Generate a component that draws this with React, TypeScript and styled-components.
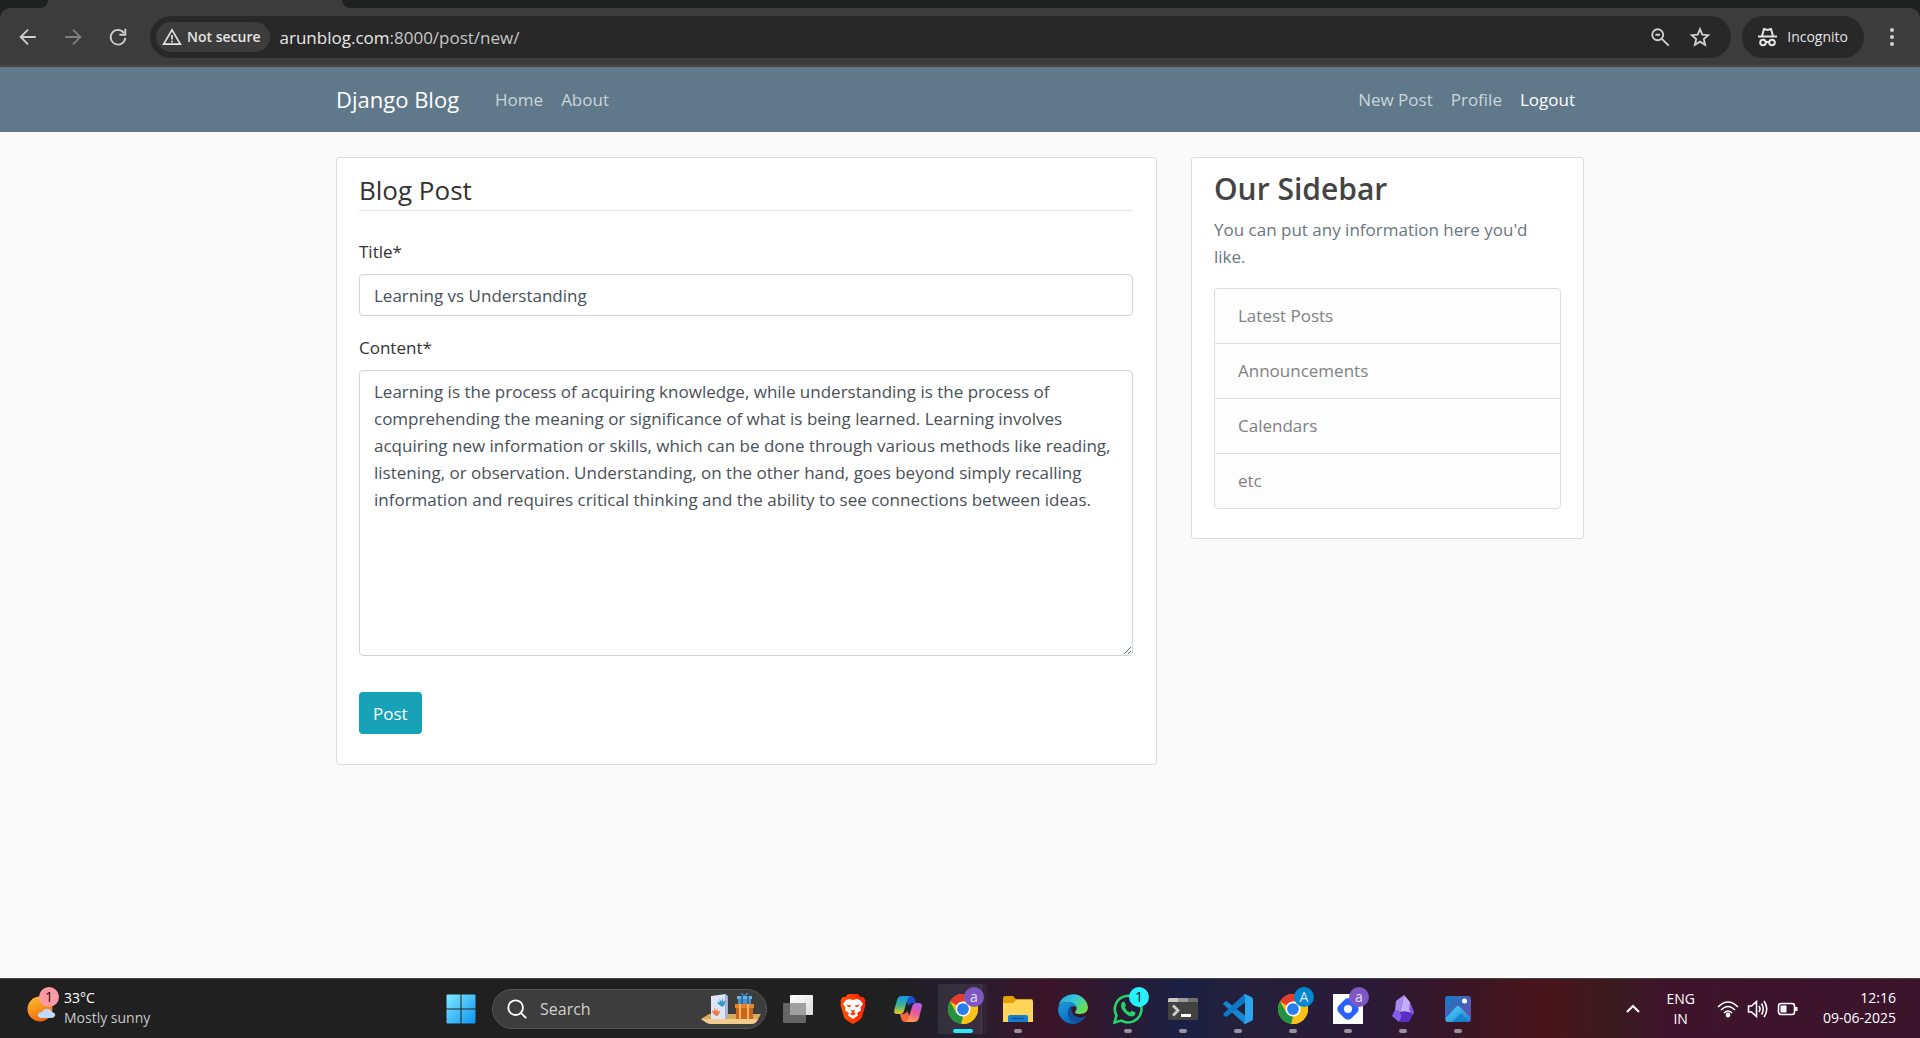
import React from "react";
import styled, { createGlobalStyle } from "styled-components";

const Global = createGlobalStyle`
  *, *::before, *::after { box-sizing: border-box; }
  html, body { margin: 0; background: #fafafa; }
  body { font-family: "Open Sans", "Noto Sans", sans-serif; font-size: 17px; line-height: 27px; color: #333; }
  h2, h3, p, ul { margin: 0; padding: 0; }
  button, input, textarea { font: inherit; }
  a { color: inherit; text-decoration: none; }
`;

const Screen = styled.div`
  display: grid;
  grid-template-rows: auto 1fr auto;
  min-height: 100vh;
`;

/* ---------- browser chrome ---------- */

const TabStrip = styled.div`
  display: flex;
  height: 8px;
  background: #3c3c3c;
`;
const StripPart = styled.div<{ $grow?: boolean }>`
  background: #1f2120;
  width: ${(p) => (p.$grow ? "auto" : "48px")};
  flex: ${(p) => (p.$grow ? "1" : "none")};
  border-radius: ${(p) => (p.$grow ? "0 0 0 10px" : "0 0 10px 0")};
`;
const ActiveTab = styled.div`
  width: 294px;
`;
const Toolbar = styled.div`
  display: flex;
  align-items: center;
  height: 59px;
  padding: 0 13px;
  background: #3c3c3c;
  border-bottom: 2px solid #474747;
  border-radius: 10px 10px 0 0;
`;
const ToolbarBack = styled.div`
  background: #1f2120;
`;
const IconButton = styled.button<{ $dim?: boolean }>`
  display: flex;
  align-items: center;
  justify-content: center;
  width: 30px;
  height: 30px;
  padding: 0;
  border: 0;
  background: none;
  color: ${(p) => (p.$dim ? "#7f7f7f" : "#d0d0d0")};
`;
const NavButtons = styled.div`
  display: flex;
  gap: 15px;
  margin-right: 17px;
`;
const Omnibox = styled.div`
  display: flex;
  align-items: center;
  flex: 1;
  height: 42px;
  padding: 0 16px 0 6px;
  border-radius: 21px;
  background: #282828;
`;
const SecurityChip = styled.button`
  display: flex;
  align-items: center;
  gap: 5px;
  height: 30px;
  padding: 0 9px 0 6px;
  border: 0;
  border-radius: 15px;
  background: #3c3c3c;
  color: #e3e3e3;
  font-size: 14px;
  line-height: 20px;
  font-weight: 600;
  white-space: nowrap;
`;
const Address = styled.div`
  flex: 1;
  margin-left: 10px;
  padding-top: 2px;
  color: #c7c7c7;
  font-size: 17px;
`;
const Host = styled.span`
  color: #e8e8e8;
`;
const OmniActions = styled.div`
  display: flex;
  gap: 10px;
`;
const IncognitoPill = styled.button`
  display: flex;
  align-items: center;
  gap: 10px;
  height: 42px;
  margin: 0 13px 0 11px;
  padding: 0 16px;
  border: 0;
  border-radius: 21px;
  background: #282828;
  color: #e3e3e3;
  font-size: 14px;
  line-height: 20px;
`;

/* ---------- blog page ---------- */

const Navbar = styled.nav`
  background: #5f788a;
`;
const Container = styled.div`
  display: flex;
  width: 100%;
  max-width: 1282px;
  margin: 0 auto;
  padding: 0 17px;
`;
const NavRow = styled(Container)`
  align-items: center;
  height: 65px;
`;
const Brand = styled.a`
  margin-right: 27px;
  color: #fff;
  font-size: 22px;
`;
const NavLinks = styled.div`
  display: flex;
  margin-right: auto;
  &:last-child { margin-right: 0; }
`;
const NavLink = styled.a<{ $active?: boolean }>`
  padding: 9px;
  color: ${(p) => (p.$active ? "#fff" : "#cbd5db")};
`;
const Columns = styled(Container)`
  align-items: flex-start;
  gap: 34px;
  padding-top: 25px;
`;
const Card = styled.section`
  border: 1px solid #ddd;
  border-radius: 3px;
  background: #fff;
`;
const FormCard = styled(Card)`
  flex: 1;
  min-width: 0;
  padding: 11px 23px 30px 22px;
`;
const SideCard = styled(Card)`
  width: 393px;
  padding: 12px 22px 29px;
`;
const Legend = styled.h2`
  margin-bottom: 27px;
  padding-top: 1px;
  border-bottom: 1px solid #dee2e6;
  font-size: 26px;
  line-height: 40px;
  font-weight: 400;
`;
const Field = styled.div`
  display: flex;
  flex-direction: column;
  gap: 9px;
  margin-bottom: 18px;
`;
const TextInput = styled.input`
  height: 42px;
  padding: 0 14px;
  border: 1px solid #ced4da;
  border-radius: 4px;
  background: #fff;
  color: #495057;
`;
const TextArea = styled.textarea`
  height: 286px;
  padding: 7px 14px;
  border: 1px solid #ced4da;
  border-radius: 4px;
  background: #fff;
  color: #495057;
  resize: vertical;
`;
const PostButton = styled.button`
  height: 42px;
  margin-top: 18px;
  padding: 0 14px;
  border: 0;
  border-radius: 4px;
  background: #17a2b8;
  color: #fff;
`;
const SideTitle = styled.h3`
  margin-bottom: 8px;
  color: #444;
  font-size: 30px;
  line-height: 38px;
  font-weight: 600;
`;
const SideText = styled.p`
  margin-bottom: 18px;
  color: #6c757d;
`;
const SideList = styled.ul`
  border: 1px solid #dcdddd;
  border-radius: 4px;
  background: #fdfdfd;
  list-style: none;
`;
const SideItem = styled.li`
  height: 55px;
  padding: 13px 23px;
  color: #818182;
  &:last-child { height: 54px; }
  &:not(:last-child) { border-bottom: 1px solid #dcdddd; }
`;

/* ---------- task bar ---------- */

const Taskbar = styled.footer`
  display: grid;
  grid-template-columns: 1fr auto 1fr;
  align-items: center;
  height: 60px;
  border-top: 1px solid #444;
  background: linear-gradient(90deg, #202020 0%, #202020 46%, #241e30 50%, #3c1427 54.5%, #2b1a33 58%, #1b2044 61.5%, #25203a 65%, #2a1a38 71%, #361628 75%, #4a151c 80.5%, #3a1b20 84%, #3f132c 87%, #3b142c 100%);
  color: #fff;
  font-size: 14px;
  line-height: 20px;
`;
const Weather = styled.button`
  display: flex;
  align-items: center;
  gap: 6px;
  width: max-content;
  padding: 0 0 2px 26px;
  border: 0;
  background: none;
  color: #fff;
  text-align: left;
`;
const Muted = styled.div`
  color: #c8c8c8;
`;
const Apps = styled.div`
  display: flex;
  align-items: center;
  height: 60px;
  padding-left: 11px;
`;
const StartButton = styled(IconButton)`
  margin-right: 16px;
`;
const SearchBox = styled.label`
  display: flex;
  align-items: center;
  gap: 12px;
  width: 275px;
  height: 40px;
  margin-right: 3px;
  padding: 0 5px 0 13px;
  border: 1px solid #555;
  border-radius: 20px;
  background: #3d3d3d;
`;
const SearchInput = styled.input`
  flex: 1;
  min-width: 0;
  padding: 0;
  border: 0;
  background: none;
  color: #fff;
  font-size: 16px;
  line-height: 24px;
  &::placeholder { color: #d0d0d0; opacity: 1; }
`;
const AppButton = styled.button<{ $active?: boolean }>`
  position: relative;
  display: flex;
  align-items: center;
  justify-content: center;
  width: 55px;
  height: 50px;
  padding: 0;
  border: 0;
  border-radius: 6px;
  background: ${(p) =>
    p.$active
      ? "linear-gradient(90deg, transparent 3px, #ffffff14 3px, #ffffff14 46px, #ffffff24 46px, #ffffff24 47px, #ffffff0a 47px, #ffffff0a 52px, transparent 52px)"
      : "none"};
`;
const Running = styled.span<{ $active?: boolean }>`
  position: absolute;
  bottom: 1px;
  width: ${(p) => (p.$active ? "20px" : "8px")};
  height: 4px;
  border-radius: 2px;
  background: ${(p) => (p.$active ? "#2ee6f6" : "#9b919f")};
`;
const Badge = styled.span<{ $bg: string; $dark?: boolean }>`
  position: absolute;
  top: 3px;
  right: 6px;
  width: 20px;
  height: 20px;
  border-radius: 50%;
  background: ${(p) => p.$bg};
  color: ${(p) => (p.$dark ? "#111" : "#e6e0f5")};
  font-size: 14px;
  line-height: 19px;
  text-align: center;
`;
const WeatherIcon = styled.span`
  position: relative;
  width: 32px;
  height: 34px;
`;
const WeatherBadge = styled(Badge)`
  top: -4px;
  right: -1px;
`;
const Tray = styled.div`
  display: flex;
  align-items: center;
  justify-content: flex-end;
  padding-right: 24px;
`;
const Language = styled.div`
  margin: 0 22px 0 26px;
  text-align: center;
`;
const Status = styled.div`
  display: flex;
  gap: 8px;
  margin-right: 24px;
`;
const Clock = styled.div`
  padding-bottom: 2px;
  text-align: right;
`;

/* ---------- drawings ---------- */

const Stroke = ({ size = 24, w = 2, children }: { size?: number; w?: number; children: React.ReactNode }) => (
  <svg width={size} height={size} viewBox="0 0 24 24" fill="none" stroke="currentColor" strokeWidth={w}>{children}</svg>
);

const Chrome = () => (
  <svg width="30" height="30" viewBox="0 0 48 48">
    <circle cx="24" cy="24" r="24" fill="#fbc116" />
    <path d="M24 24 3.2 12A24 24 0 0 1 44.8 12H24Z" fill="#e33b2e" />
    <path d="M3.2 12 13.6 30 24 36 21 47.8A24 24 0 0 1 3.2 12Z" fill="#229342" />
    <path d="M24 12H44.8A24 24 0 0 1 21 47.8L34.4 30Z" fill="#fbc116" />
    <circle cx="24" cy="24" r="12" fill="#fff" />
    <circle cx="24" cy="24" r="9.4" fill="#2b7de9" />
  </svg>
);

const WindowsLogo = () => (
  <svg width="30" height="30" viewBox="0 0 30 30">
    <defs>
      <linearGradient id="win" x1="0" y1="0" x2="1" y2="1">
        <stop offset="0" stopColor="#7cecff" /><stop offset="1" stopColor="#0f93f5" />
      </linearGradient>
    </defs>
    <path d="M1.500 .5H14.500V14.500H.5V1.500Q.5.5 1.500.5M15.500.5H28.500Q29.500.5 29.500 1.500V14.500H15.500ZM.5 15.500H14.500V29.500H1.500Q.5 29.500.5 28.500ZM15.500 15.500H29.500V28.500Q29.500 29.500 28.500 29.500H15.500Z" fill="url(#win)" />
  </svg>
);

const SearchArt = () => (
  <svg width="60" height="32" viewBox="0 0 60 32">
    <path d="M0 26 8 21H60L56 28Q54 31 50 31H11Q8 31 6 30Z" fill="#d9a95f" />
    <path d="M0 26H57L56 28Q54 31 50 31H11Q8 31 6 30Z" fill="#f0cd8f" />
    <path d="M10 3 25 1V26H10Z" fill="#dfe3f6" /><path d="M24 1 27 3V25L24 26Z" fill="#a9b0d6" />
    <path d="M17 8 19 10 18.500 5.500 20.500 9 21.500 4.500 22 9 24.500 7 23.500 12Q21.500 15 18.500 12L16.500 10.500Z" fill="#2d9cc8" />
    <path d="M11 17 13 18.500 13 14.500 14.800 18 16.500 15 16.500 18.500 19.500 18 17.500 22Q15.500 24 13 21.500L11.500 19.500Z" fill="#f07b3c" />
    <path d="M35 11H52V26H35Z" fill="#c9661c" /><path d="M34 11H53V15H34Z" fill="#e8832b" />
    <path d="M38 11h2V26h-2ZM46 11h2V26h-2Z" fill="#f2b35a" />
    <path d="M37 4H50V11H37Z" fill="#4b8fc4" /><path d="M36 3H51V6H36Z" fill="#69b3e2" />
    <path d="M40 3h2v8h-2ZM46 3h2v8h-2Z" fill="#2f6ea6" /><path d="M43.500 3 40 0M43.500 3 47 0" stroke="#3d86cc" strokeWidth="1.500" />
  </svg>
);

const TaskView = () => (
  <svg width="30" height="28" viewBox="0 0 30 28">
    <defs><linearGradient id="tv" x2="1" y2="1"><stop stopColor="#fff" /><stop offset="1" stopColor="#dadada" /></linearGradient></defs>
    <rect x="7" width="23" height="20" rx="1" fill="url(#tv)" />
    <rect y="8" width="23" height="20" rx="1" fill="#666" />
    <path d="M7 8H23V20H7Z" fill="#a0a0a0" />
  </svg>
);

const Brave = () => (
  <svg width="26" height="30" viewBox="0 0 26 30">
    <defs><linearGradient id="br" x2="1"><stop stopColor="#ff5500" /><stop offset="1" stopColor="#ff2000" /></linearGradient></defs>
    <path d="M8 0H18L20.500 3 23.500 3 25.500 6.500 25 9 25.500 11 22 23Q21 26 13 30 5 26 4 23L.5 11 1 9 .5 6.500 2.500 3 5.500 3Z" fill="url(#br)" />
    <path d="M13 6 16.500 5 20 6 23 10 20.500 13.500 21 16.500 17 19 18 21.500 13 25 8 21.500 9 19 5 16.500 5.500 13.500 3 10 6 6 9.500 5Z" fill="#fff" />
    <path d="M6 10.500 11 11.500 10.500 13 8.500 13ZM20 10.500 15 11.500 15.500 13 17.500 13ZM11 15.500 13 16.500 15 15.500 14 18.500 16 20 13 21.500 10 20 12 18.500Z" fill="#ff3c00" />
  </svg>
);

const Copilot = () => (
  <svg width="30" height="28" viewBox="0 0 30 28">
    <defs>
      <linearGradient id="cp1" x1=".3" x2=".3" y2="1"><stop stopColor="#1599e8" /><stop offset=".5" stopColor="#35b28c" /><stop offset="1" stopColor="#f2c81e" /></linearGradient>
      <linearGradient id="cp2" x1=".7" x2=".4" y2="1"><stop stopColor="#b45cf0" /><stop offset=".5" stopColor="#e9579a" /><stop offset="1" stopColor="#ff9b52" /></linearGradient>
    </defs>
    <path d="M10 1H18Q21 1 22 5L23 8H20Q17 8 16 11Z" fill="#1b50cc" />
    <path d="M20 27H12Q9 27 8 23L7 19H10Q13 19 14 16Z" fill="#f2663f" />
    <path d="M9 1H17Q15 2 14 6L11 16Q10 19 7 19H4Q0 19 1.500 14L4 5Q5 1 9 1Z" fill="url(#cp1)" />
    <path d="M21 27H13Q15 26 16 22L19 12Q20 8 23 8H26Q30 8 28.500 13L26 23Q25 27 21 27Z" fill="url(#cp2)" />
  </svg>
);

const Folder = () => (
  <svg width="30" height="28" viewBox="0 0 30 28">
    <path d="M0 3Q0 1 2 1H10L13 4H28Q30 4 30 6V12H0Z" fill="#e0a100" />
    <path d="M0 8H10L13 5H28Q30 5 30 7V27H0Z" fill="#ffd458" />
    <path d="M5 27V22Q5 20 7 20H23Q25 20 25 22V27Z" fill="#1280d2" /><path d="M9 23.500H21" stroke="#084d91" strokeWidth="1.500" />
  </svg>
);

const Edge = () => (
  <svg width="30" height="30" viewBox="0 0 30 30">
    <defs>
      <linearGradient id="ed1" x2="1" y2=".6"><stop stopColor="#22a0dc" /><stop offset=".5" stopColor="#33c7d8" /><stop offset="1" stopColor="#6be04a" /></linearGradient>
      <linearGradient id="ed2" x2=".6" y2="1"><stop stopColor="#1b9de2" /><stop offset="1" stopColor="#0b66b8" /></linearGradient>
    </defs>
    <path d="M.5 12A15 15 0 0 1 30 13Q30 20 22 20 17 20 17 18 19 16 18.500 13 16 8 9 8 3 8 .5 12Z" fill="url(#ed1)" />
    <path d="M0 15Q1 8 9 8 17 8 18.500 13 11 10 10 18 10 27 20 29A15 15 0 0 1 0 15Z" fill="url(#ed2)" />
    <path d="M14 12Q9 15 10.500 21 13 29 20 29 25 27 28 22 22 25 17 22 12 18 14 12Z" fill="#11509f" />
  </svg>
);

const WhatsApp = () => (
  <svg width="30" height="30" viewBox="0 0 30 30">
    <path d="M1.500 28.500 3.500 21.500A13.300 13.300 0 1 1 8.500 26.600Z" fill="none" stroke="#25d366" strokeWidth="2.600" />
    <path d="M9.500 8Q11 7 11.800 8.500L13 11.500 11.800 13.500Q13.500 17 17 18.500L18.800 16.800 22.500 18.500Q22.500 22 19 22.500 16 22.500 12 19 8 15 8 11.500 8 9 9.500 8Z" fill="#25d366" />
  </svg>
);

const Terminal = () => (
  <svg width="30" height="22" viewBox="0 0 30 22">
    <rect width="30" height="22" rx="1.500" fill="#424242" /><path d="M0 4V1.500Q0 0 1.500 0H10V4Z" fill="#c9c9c9" /><path d="M10 0H20V4H10Z" fill="#9b9b9b" /><path d="M20 0H28.500Q30 0 30 1.500V4H20Z" fill="#707070" />
    <path d="M5 7.500 10 12.500 5 17.500" stroke="#ccc" strokeWidth="2.800" fill="none" /><path d="M13 17.500H23" stroke="#fff" strokeWidth="3" />
  </svg>
);

const VSCode = () => (
  <svg width="30" height="30" viewBox="0 0 30 30">
    <path d="M22 30V21.500L4 7.500Q3 7 2 7.500L.5 9Q0 10 .5 10.500L20.500 29Z" fill="#1787d2" />
    <path d="M22 0V8.500L4 22.500Q3 23 2 22.500L.5 21Q0 20 .5 19.500L20.500 1Z" fill="#0d78c4" />
    <path d="M22 0 28.500 3Q30 4 30 5.500V24.500Q30 26 28.500 27L22 30 20.500 29 22 28V2L20.500 1Z" fill="#2aa5ee" />
  </svg>
);

const HashIcon = () => (
  <svg width="30" height="30" viewBox="0 0 30 30">
    <path d="M0 0H30V30H0Z" fill="#fff" />
    <rect x="6" y="6" width="18" height="18" rx="5" transform="rotate(45 15 15)" fill="#2962ff" />
    <circle cx="15" cy="15" r="4" fill="#fff" />
  </svg>
);

const Obsidian = () => (
  <svg width="22" height="28" viewBox="0 0 22 28">
    <path d="M12 0 4 6 3 15 8 17 10 10Z" fill="#a88bf0" /><path d="M12 0 10 10 8 17 19 19 18 7Z" fill="#c5aefa" />
    <path d="M3 15 0 21 7 27Q11 22 8 17Z" fill="#8a5cf0" /><path d="M8 17Q15 15 21 19L17 27 7 27Q11 22 8 17Z" fill="#5a2ec4" /><path d="M18 7 22 17 21 20 17 15Z" fill="#8757e8" />
  </svg>
);

const Photos = () => (
  <svg width="26" height="26" viewBox="0 0 26 26">
    <defs>
      <linearGradient id="ph" x2="1" y2="1"><stop stopColor="#187cc2" /><stop offset="1" stopColor="#7148ad" /></linearGradient>
      <linearGradient id="ph2" x2="1" y2="1"><stop stopColor="#55d8ff" /><stop offset="1" stopColor="#1583d1" /></linearGradient>
    </defs>
    <rect width="26" height="26" rx="3" fill="url(#ph)" />
    <path d="M1 22 11 11Q13 9 15 11L25 21V23Q25 26 22 26H4Q0 26 1 22Z" fill="url(#ph2)" />
    <path d="M7 26 15 18Q17 17 18 19L23 26Z" fill="#0e6fbd" opacity=".6" />
    <circle cx="19.500" cy="5" r="2.500" fill="#fff" />
  </svg>
);

const SunCloud = () => (
  <svg width="32" height="34" viewBox="0 0 32 34">
    <defs><linearGradient id="sun" x1=".2" x2=".6" y2="1"><stop stopColor="#fbbf2c" /><stop offset="1" stopColor="#f0640f" /></linearGradient></defs>
    <circle cx="14" cy="18" r="12.500" fill="url(#sun)" />
    <path d="M15 27Q11 26 12 23 13 21 16 21 18 17 22 18 25 18 26 21 30 22 29 25 28 27 25 27Z" fill="#c2d8f8" />
  </svg>
);

type App = { name: string; icon: React.ReactNode; running?: boolean; active?: boolean; badge?: string; bg?: string; dark?: boolean };
const apps: App[] = [
  { name: "Task view", icon: <TaskView /> },
  { name: "Brave", icon: <Brave /> },
  { name: "Copilot", icon: <Copilot /> },
  { name: "Chrome", icon: <Chrome />, running: true, active: true, badge: "a", bg: "#7e57c2" },
  { name: "File Explorer", icon: <Folder />, running: true },
  { name: "Edge", icon: <Edge /> },
  { name: "WhatsApp", icon: <WhatsApp />, running: true, badge: "1", bg: "#27f0ff", dark: true },
  { name: "Terminal", icon: <Terminal />, running: true },
  { name: "Visual Studio Code", icon: <VSCode />, running: true },
  { name: "Chrome, second profile", icon: <Chrome />, running: true, badge: "A", bg: "#0288d1" },
  { name: "Hashnode", icon: <HashIcon />, running: true, badge: "a", bg: "#7e57c2" },
  { name: "Obsidian", icon: <Obsidian />, running: true },
  { name: "Photos", icon: <Photos />, running: true },
];

const content =
  "Learning is the process of acquiring knowledge, while understanding is the process of comprehending the meaning or significance of what is being learned. Learning involves acquiring new information or skills, which can be done through various methods like reading, listening, or observation. Understanding, on the other hand, goes beyond simply recalling information and requires critical thinking and the ability to see connections between ideas.";

export default function App() {
  return (
    <Screen>
      <Global />
      <header>
        <TabStrip>
          <StripPart />
          <ActiveTab />
          <StripPart $grow />
        </TabStrip>
        <ToolbarBack>
          <Toolbar>
            <NavButtons>
              <IconButton aria-label="Back"><Stroke size={22}><path d="M20.500 12H4.500M12 4 4 12 12 20" /></Stroke></IconButton>
              <IconButton aria-label="Forward" $dim><Stroke size={22}><path d="M3.500 12H19.500M12 4 20 12 12 20" /></Stroke></IconButton>
              <IconButton aria-label="Reload"><Stroke size={22}><path d="M18.500 7.500A8 8 0 1 0 20 13M20 3V9.500H13.500" /></Stroke></IconButton>
            </NavButtons>
            <Omnibox>
              <SecurityChip>
                <Stroke size={20}><path d="M12 3.500 22 20.500H2ZM12 9.500V15M12 16.500V18.500" /></Stroke>
                Not secure
              </SecurityChip>
              <Address><Host>arunblog.com</Host>:8000/post/new/</Address>
              <OmniActions>
                <IconButton aria-label="Zoom"><Stroke size={22}><circle cx="9.500" cy="9.500" r="6" /><path d="M14 14 21.500 21.500M7 9.500H12" /></Stroke></IconButton>
                <IconButton aria-label="Bookmark"><Stroke size={22}><path d="M12 3.500 14.500 9.400 21 10 16.100 14.200 17.600 20.500 12 17.100 6.400 20.500 7.900 14.200 3 10 9.500 9.400Z" /></Stroke></IconButton>
              </OmniActions>
            </Omnibox>
            <IncognitoPill>
              <svg width="19" height="20" viewBox="0 0 19 20" fill="none" stroke="#e3e3e3" strokeWidth="2">
                <path d="M0 9.500H19M4 9 6 2 9.500 3 13 2 15 9" /><circle cx="5" cy="15.500" r="2.800" /><circle cx="14" cy="15.500" r="2.800" /><path d="M8 15H11" />
              </svg>
              Incognito
            </IncognitoPill>
            <IconButton aria-label="Menu">
              <svg width="6" height="22" fill="currentColor"><circle cx="3" cy="4" r="2" /><circle cx="3" cy="11" r="2" /><circle cx="3" cy="18" r="2" /></svg>
            </IconButton>
          </Toolbar>
        </ToolbarBack>
        <Navbar>
          <NavRow>
            <Brand href="#">Django Blog</Brand>
            <NavLinks><NavLink href="#">Home</NavLink><NavLink href="#">About</NavLink></NavLinks>
            <NavLinks><NavLink href="#">New Post</NavLink><NavLink href="#">Profile</NavLink><NavLink href="#" $active>Logout</NavLink></NavLinks>
          </NavRow>
        </Navbar>
      </header>
      <main>
        <Columns>
          <FormCard>
            <Legend>Blog Post</Legend>
            <Field><label htmlFor="title">Title*</label><TextInput id="title" defaultValue="Learning vs Understanding" /></Field>
            <Field><label htmlFor="content">Content*</label><TextArea id="content" defaultValue={content} /></Field>
            <PostButton>Post</PostButton>
          </FormCard>
          <SideCard>
            <SideTitle>Our Sidebar</SideTitle>
            <SideText>You can put any information here you'd like.</SideText>
            <SideList>
              {["Latest Posts", "Announcements", "Calendars", "etc"].map((t) => <SideItem key={t}>{t}</SideItem>)}
            </SideList>
          </SideCard>
        </Columns>
      </main>
      <Taskbar>
        <Weather>
          <WeatherIcon><SunCloud /><WeatherBadge $bg="#ff99a4" $dark>1</WeatherBadge></WeatherIcon>
          <div>33°C<Muted>Mostly sunny</Muted></div>
        </Weather>
        <Apps>
          <StartButton aria-label="Start"><WindowsLogo /></StartButton>
          <SearchBox>
            <Stroke size={22} w={2}><circle cx="10.500" cy="10.500" r="8" /><path d="M16.500 16.500 22 22" /></Stroke>
            <SearchInput placeholder="Search" aria-label="Search" />
            <SearchArt />
          </SearchBox>
          {apps.map((a) => (
            <AppButton key={a.name} aria-label={a.name} $active={a.active}>
              {a.icon}
              {a.badge && <Badge $bg={a.bg!} $dark={a.dark}>{a.badge}</Badge>}
              {a.running && <Running $active={a.active} />}
            </AppButton>
          ))}
        </Apps>
        <Tray>
          <svg width="14" height="10" viewBox="0 0 14 10" fill="none" stroke="#fff" strokeWidth="2"><path d="M1 8 7 2 13 8" /></svg>
          <Language>ENG<br />IN</Language>
          <Status>
            <svg width="22" height="20" viewBox="0 0 22 20" fill="none" stroke="#fff" strokeWidth="1.600"><path d="M1 8Q11-2 21 8M4 11Q11 4 18 11M7 14Q11 10 15 14" /><circle cx="11" cy="16" r="1.600" fill="#fff" /></svg>
            <svg width="22" height="20" viewBox="0 0 22 20" fill="none" stroke="#fff" strokeWidth="1.600"><path d="M1.500 7H4.500L9.500 2.500V17.500L4.500 13H1.500ZM12 7Q14 10 12 13M14.500 4.500Q18 10 14.500 15.500M17 2Q22.500 10 17 18" /></svg>
            <svg width="22" height="20" viewBox="0 0 22 20" fill="none" stroke="#fff" strokeWidth="1.600"><rect x="1.500" y="4.500" width="16" height="11" rx="2.500" /><path d="M3.500 6.500H9.500V13.500H3.500Z" fill="#fff" stroke="none" /><path d="M18 8H20.500V12H18" fill="#fff" stroke="none" /></svg>
          </Status>
          <Clock>12:16<br />09-06-2025</Clock>
        </Tray>
      </Taskbar>
    </Screen>
  );
}
